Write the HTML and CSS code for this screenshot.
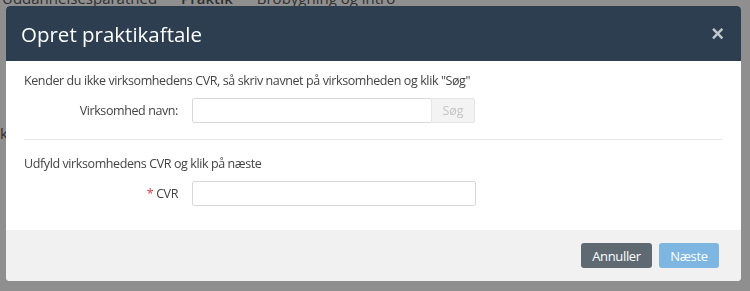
FILE: index.html
```html
<!DOCTYPE html>
<html lang="da">
<head>
    <meta charset="UTF-8">
    <meta name="viewport" content="width=device-width, initial-scale=1.0">
    <title>Opret praktikaftale</title>
    <link rel="stylesheet" href="styles.css">
</head>
<body>

    <!-- siden bag dialogen -->
    <div class="page">
        <nav class="page-nav">
            <span>Uddannelsesparathed</span>
            <span class="active">Praktik</span>
            <span>Brobygning og intro</span>
        </nav>
        <div class="page-row"><span>k</span></div>
    </div>

    <div class="backdrop"></div>

    <!-- dialog -->
    <div class="modal">
        <div class="modal-header">
            <h1 class="modal-title">Opret praktikaftale</h1>
            <button class="modal-close" type="button">&times;</button>
        </div>

        <div class="modal-body">
            <p class="hint">Kender du ikke virksomhedens CVR, så skriv navnet på virksomheden og klik "Søg"</p>
            <div class="form-row">
                <label class="form-label" for="navn">Virksomhed navn:</label>
                <div class="input-group">
                    <input id="navn" class="form-input" type="text">
                    <button class="btn-search" type="button" disabled>Søg</button>
                </div>
            </div>

            <hr class="divider">

            <p class="hint">Udfyld virksomhedens CVR og klik på næste</p>
            <div class="form-row">
                <label class="form-label" for="cvr"><span class="required">*</span> CVR</label>
                <input id="cvr" class="form-input wide" type="text">
            </div>
        </div>

        <div class="modal-footer">
            <button class="btn btn-cancel" type="button">Annuller</button>
            <button class="btn btn-next" type="button" disabled>Næste</button>
        </div>
    </div>

</body>
</html>
```

FILE: styles.css
```css
/* grundlæggende */
body {
    margin: 0;
    background: #fff;
    font-family: "Open Sans", "Noto Sans", sans-serif;
    color: #444;
    overflow: hidden;
}

/* siden bag dialogen */
.page-nav {
    display: flex;
    gap: 24px;
    margin-top: -12px;
    padding-left: 2px;
    font-size: 15px;
    color: #555;
}

.page-nav .active {
    font-weight: 600;
}

.page-row {
    margin-top: 115px;
    font-size: 15px;
    color: #555;
}

/* grå baggrund */
.backdrop {
    position: fixed;
    inset: 0;
    background: rgba(0, 0, 0, 0.44);
}

/* dialogboksen */
.modal {
    position: fixed;
    top: 6px;
    left: 6px;
    width: 735px;
    height: 275px;
    display: flex;
    flex-direction: column;
    background: #fff;
    border-radius: 4px;
    overflow: hidden;
}

.modal-header {
    height: 55px;
    flex-shrink: 0;
    display: flex;
    align-items: center;
    justify-content: space-between;
    padding: 0 17px 0 15px;
    background: #2c3e50;
}

.modal-title {
    margin: 0;
    font-size: 20.5px;
    font-weight: 400;
    color: #fff;
}

.modal-close {
    border: 0;
    background: none;
    padding: 0;
    font-size: 22px;
    font-weight: 700;
    line-height: 1;
    color: #c2c7cc;
    cursor: pointer;
}

.modal-body {
    flex: 1;
    padding: 11px 19px 0 18px;
    font-size: 12.5px;
    letter-spacing: -0.4px;
}

.hint {
    margin: 0;
    line-height: 18px;
}

.form-row {
    display: flex;
    align-items: center;
    margin-top: 8px;
}

.form-label {
    width: 154px;
    padding-right: 14px;
    text-align: right;
}

.required {
    color: #e0393e;
}

.input-group {
    display: flex;
}

.form-input {
    box-sizing: border-box;
    width: 240px;
    height: 25px;
    border: 1px solid #d9d9d9;
    border-radius: 2px;
    font: inherit;
}

.form-input.wide {
    width: 284px;
}

.btn-search {
    width: 44px;
    height: 25px;
    margin-left: -1px;
    border: 1px solid #e6e6e6;
    border-radius: 0 2px 2px 0;
    background: #f3f3f3;
    color: #c4c4c4;
    font: inherit;
}

.divider {
    margin: 16px 0 15px 0;
    border: 0;
    border-top: 1px solid #e6e6e6;
}

/* bund med knapper */
.modal-footer {
    height: 51px;
    flex-shrink: 0;
    display: flex;
    align-items: center;
    justify-content: flex-end;
    gap: 7px;
    padding-right: 22px;
    background: #f1f1f1;
}

.btn {
    height: 25px;
    padding: 0;
    border: 0;
    border-radius: 3px;
    color: #fff;
    font-family: "Open Sans", "Noto Sans", sans-serif;
    font-size: 13px;
    letter-spacing: -0.35px;
}

.btn-cancel {
    width: 71px;
    background: #5e6971;
}

.btn-next {
    width: 60px;
    background: #7db6e0;
}
```
